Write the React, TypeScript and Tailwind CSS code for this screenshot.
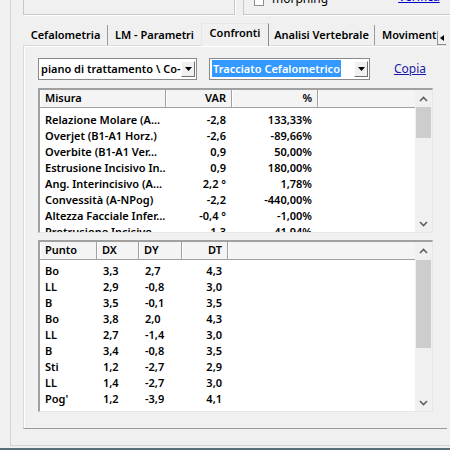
import React from 'react';

const misure = [
  ['Relazione Molare (A...', '-2,8', '133,33%'],
  ['Overjet (B1-A1 Horz.)', '-2,6', '-89,66%'],
  ['Overbite (B1-A1 Ver...', '0,9', '50,00%'],
  ['Estrusione Incisivo In...', '0,9', '180,00%'],
  ['Ang. Interincisivo (A...', '2,2 °', '1,78%'],
  ['Convessità (A-NPog)', '-2,2', '-440,00%'],
  ['Altezza Facciale Infer...', '-0,4 °', '-1,00%'],
  ['Protrusione Incisivo ...', '1,3', '41,94%'],
];

const punti = [
  ['Bo', '3,3', '2,7', '4,3'],
  ['LL', '2,9', '-0,8', '3,0'],
  ['B', '3,5', '-0,1', '3,5'],
  ['Bo', '3,8', '2,0', '4,3'],
  ['LL', '2,7', '-1,4', '3,0'],
  ['B', '3,4', '-0,8', '3,5'],
  ['Sti', '1,2', '-2,7', '2,9'],
  ['LL', '1,4', '-2,7', '3,0'],
  ["Pog'", '1,2', '-3,9', '4,1'],
  ['IIS', '1,3', '-2,4', '2,6'],
];

const Chevron = ({ up }: { up?: boolean }) => (
  <svg width="9" height="6" viewBox="0 0 9 6">
    <polyline
      points={up ? '1,5 4.5,1.5 8,5' : '1,1 4.5,4.5 8,1'}
      fill="none"
      stroke="#606060"
      strokeWidth="1.6"
    />
  </svg>
);

const ScrollBar = ({ thumbTop, thumbH }: { thumbTop: number; thumbH: number }) => (
  <div className="w-[17px] flex flex-col bg-[#f0f0f0]">
    <div className="h-[17px] flex items-center justify-center">
      <Chevron up />
    </div>
    <div className="flex-1 flex flex-col">
      <div style={{ height: thumbTop }} />
      <div className="mx-[1px] bg-[#cdcdcd]" style={{ height: thumbH }} />
    </div>
    <div className="h-[17px] flex items-center justify-center">
      <Chevron />
    </div>
  </div>
);

const HeadCell = ({ w, right, children }: { w: string; right?: boolean; children?: React.ReactNode }) => (
  <div
    className={`${w} h-full border-r border-[#a0a0a0] shadow-[inset_1px_0_0_#ffffff] flex items-center px-[5px] ${right ? 'justify-end' : ''}`}
  >
    {children}
  </div>
);

const DropBtn = () => (
  <div className="w-[14px] h-[16px] bg-[#f0f0f0] border border-t-white border-l-white border-r-[#707070] border-b-[#707070] flex items-center justify-center">
    <svg width="7" height="4" viewBox="0 0 7 4">
      <polygon points="0,0 7,0 3.5,4" fill="#000" />
    </svg>
  </div>
);

export default function App() {
  return (
    <div className="w-[450px] h-[450px] overflow-hidden bg-[#f0f0f0] flex flex-col font-['Noto_Sans',sans-serif] text-[11px] font-semibold text-black">
      <div className="h-[446px] ml-[10px] border-l border-b border-[#d4d4d4] flex flex-col">
        {/* top group boxes, cut off */}
        <div className="h-[15px] flex pl-[12px]">
          <div className="w-[212px] h-[15px] border-x border-b border-[#c8c8c8] shadow-[1px_1px_0_#ffffff]" />
          <div className="ml-[8px] flex-1 h-[15px] border-l border-b border-[#c8c8c8] shadow-[1px_1px_0_#ffffff] flex items-start">
            <div className="flex items-center mt-[-9px] ml-[10px]">
              <div className="w-[10px] h-[14px] border border-[#8f8f8f] bg-white" />
              <span className="ml-[8px] font-normal text-[12px] leading-[16px]">morphing</span>
            </div>
            <span className="ml-[70px] mt-[-11px] font-normal text-[12px] leading-[16px] text-[#0000cc] underline">Verifica</span>
          </div>
        </div>

        {/* tabs */}
        <div className="mt-[7px] h-[23px] flex items-end pl-[13px] whitespace-nowrap">
          <div className="w-[84px] h-[20px] border-r border-[#9a9a9a] flex items-center justify-center">Cefalometria</div>
          <div className="w-[93px] h-[20px] flex items-center justify-center">LM - Parametri</div>
          <div className="w-[68px] h-[23px] bg-[#f0f0f0] border-t border-l border-[#e6e6e6] border-r border-r-[#8a8a8a] flex items-start pt-[1px] justify-center relative top-[1px] z-10">Confronti</div>
          <div className="w-[106px] h-[20px] border-r border-[#9a9a9a] flex items-center justify-center">Analisi Vertebrale</div>
          <div className="w-[62px] h-[20px] flex items-center pl-[7px] overflow-hidden">Moviment</div>
          <div className="w-[12px] h-[20px] flex items-end">
            <div className="w-[9px] h-[14px] border-l border-b border-[#909090] flex items-center justify-center">
              <svg width="4" height="6" viewBox="0 0 4 6"><polygon points="4,0 4,6 0,3" fill="#000" /></svg>
            </div>
          </div>
        </div>

        {/* panel */}
        <div className="ml-[12px] mr-[3px] h-[384px] border-t border-l border-[#dadada] border-b border-b-[#9a9a9a] shadow-[inset_1px_1px_0_#ffffff] px-[14px] pt-[12px] flex flex-col">
          {/* combos */}
          <div className="flex items-center h-[22px]">
            <div className="w-[159px] h-[22px] bg-white border border-[#8a8a8a] flex items-center pl-[2px] pr-[1px]">
              <span className="flex-1 overflow-hidden whitespace-nowrap">piano di trattamento \ Co-</span>
              <DropBtn />
            </div>
            <div className="ml-[12px] w-[161px] h-[22px] bg-white border border-[#8a8a8a] flex items-center pl-[2px] pr-[1px]">
              <span className="flex-1">
                <span className="bg-[#3399ff] text-white px-[1px] leading-[17px] inline-block">Tracciato Cefalometrico</span>
              </span>
              <DropBtn />
            </div>
            <span className="ml-[24px] font-normal text-[12px] text-[#1a1aa6] underline">Copia</span>
          </div>

          {/* table 1 */}
          <div className="mt-[8px] h-[145px] flex border-t-2 border-l-2 border-t-[#a0a0a0] border-l-[#a0a0a0] border-r border-b border-r-[#e6e6e6] border-b-[#e6e6e6] bg-white">
            <div className="flex-1 flex flex-col overflow-hidden">
              <div className="h-[18px] flex bg-[#f4f4f4] border-b border-[#a0a0a0] shrink-0">
                <HeadCell w="w-[126px]">Misura</HeadCell>
                <HeadCell w="w-[66px]" right>VAR</HeadCell>
                <HeadCell w="w-[86px]" right>%</HeadCell>
                <div className="flex-1 shadow-[inset_1px_0_0_#ffffff]" />
              </div>
              <div className="pt-[4px] flex flex-col">
                {misure.map((r, i) => (
                  <div key={i} className="h-[16px] leading-[16px] flex whitespace-nowrap shrink-0">
                    <div className="w-[126px] pl-[5px] overflow-hidden">{r[0]}</div>
                    <div className="w-[66px] pr-[6px] text-right">{r[1]}</div>
                    <div className="w-[86px] pr-[6px] text-right">{r[2]}</div>
                  </div>
                ))}
              </div>
            </div>
            <ScrollBar thumbTop={0} thumbH={31} />
          </div>

          {/* table 2 */}
          <div className="mt-[7px] h-[172px] flex border-t-2 border-l-2 border-t-[#a0a0a0] border-l-[#a0a0a0] border-r border-b border-r-[#e6e6e6] border-b-[#e6e6e6] bg-white">
            <div className="flex-1 flex flex-col overflow-hidden">
              <div className="h-[18px] flex bg-[#f4f4f4] border-b border-[#a0a0a0] shrink-0">
                <HeadCell w="w-[57px]">Punto</HeadCell>
                <HeadCell w="w-[42px]">DX</HeadCell>
                <HeadCell w="w-[43px]">DY</HeadCell>
                <HeadCell w="w-[46px]" right>DT</HeadCell>
                <div className="flex-1 shadow-[inset_1px_0_0_#ffffff]" />
              </div>
              <div className="pt-[3px] flex flex-col">
                {punti.map((r, i) => (
                  <div key={i} className="h-[16px] leading-[16px] flex whitespace-nowrap shrink-0">
                    <div className="w-[57px] pl-[5px]">{r[0]}</div>
                    <div className="w-[42px] pl-[6px]">{r[1]}</div>
                    <div className="w-[43px] pl-[6px]">{r[2]}</div>
                    <div className="w-[46px] pr-[6px] text-right">{r[3]}</div>
                  </div>
                ))}
              </div>
            </div>
            <ScrollBar thumbTop={1} thumbH={88} />
          </div>
        </div>
      </div>
      <div className="h-[2px] mt-[2px] bg-[#58707c]" />
    </div>
  );
}
